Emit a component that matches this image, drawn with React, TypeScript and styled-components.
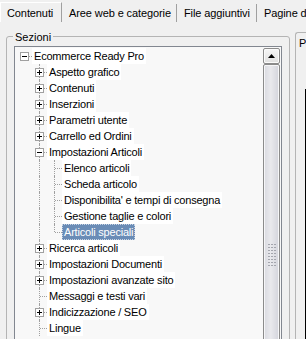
import React from 'react';
import styled, { createGlobalStyle, css } from 'styled-components';

const GlobalStyle = createGlobalStyle`
    html, body {
        margin: 0;
        padding: 0;
        background: #f0f0f0;
    }
    body {
        font-family: "Liberation Sans", Arial, sans-serif;
        font-size: 11px;
        color: #000;
    }
`;

const Window = styled.div`
    width: 306px;
    height: 339px;
    overflow: hidden;
    background: #f0f0f0;
    display: flex;
    flex-direction: column;
`;

const TabStrip = styled.div`
    display: flex;
    align-items: flex-start;
    height: 22px;
    flex-shrink: 0;
    white-space: nowrap;
    overflow: hidden;
`;

const Tab = styled.div<{ $w?: number; $active?: boolean }>`
    box-sizing: border-box;
    flex-shrink: 0;
    ${({ $w }) => ($w ? `width: ${$w}px;` : 'flex: 1;')}
    line-height: 13px;
    letter-spacing: -0.1px;
    border-right: 1px solid #a0a0a0;
    ${({ $active }) =>
        $active
            ? css`
                  margin-top: 2px;
                  height: 20px;
                  padding: 4px 0 0 6px;
                  border-left: 1px solid #ffffff;
                  border-top: 1px solid #ffffff;
              `
            : css`
                  margin-top: 4px;
                  height: 18px;
                  padding: 3px 0 0 7px;
              `}
`;

const Panel = styled.div`
    display: flex;
    align-items: flex-start;
    padding: 10px 0 0 6px;
`;

const GroupBox = styled.div`
    box-sizing: border-box;
    width: 284px;
    margin-top: 4px;
    flex-shrink: 0;
    display: flex;
    flex-direction: column;
    padding: 0 7px;
    border: 1px solid #b4b4b4;
    border-radius: 3px;
`;

const Caption = styled.div`
    align-self: flex-start;
    margin: -6px 0 0 -1px;
    padding: 0 2px;
    line-height: 13px;
    background: #f0f0f0;
`;

const TreeView = styled.div`
    margin-top: 2px;
    height: 400px;
    display: flex;
    background: #f8f8f8;
    border: 1px solid #828790;
    overflow: hidden;
`;

const TreeList = styled.div`
    flex: 1;
    padding: 1px 0 0 2px;
    display: flex;
    flex-direction: column;
`;

const Row = styled.div`
    display: flex;
    height: 16px;
    flex-shrink: 0;
`;

const Guide = styled.div<{ $v: 'none' | 'full' | 'top'; $h?: boolean }>`
    position: relative;
    width: 15px;
    flex-shrink: 0;
    &::before {
        content: '';
        display: ${({ $v }) => ($v === 'none' ? 'none' : 'block')};
        position: absolute;
        left: 7px;
        top: 0;
        height: ${({ $v }) => ($v === 'top' ? '8px' : '16px')};
        border-left: 1px dotted #a0a0a0;
    }
    &::after {
        content: '';
        display: ${({ $h }) => ($h ? 'block' : 'none')};
        position: absolute;
        left: 8px;
        right: 0;
        top: 8px;
        border-top: 1px dotted #a0a0a0;
    }
`;

const Expander = styled.div`
    position: absolute;
    z-index: 1;
    left: 3px;
    top: 4px;
    width: 9px;
    height: 9px;
    box-sizing: border-box;
    border: 1px solid #a0a0a0;
    background: #ffffff;
    display: flex;
    align-items: center;
    justify-content: center;
`;

const Label = styled.div<{ $selected?: boolean }>`
    box-sizing: border-box;
    padding: 0 2px;
    line-height: 16px;
    letter-spacing: -0.2px;
    white-space: nowrap;
    background: #ffffff;
    ${({ $selected }) =>
        $selected &&
        css`
            background: #6a8cb6;
            color: #ffffff;
            outline: 1px dotted #c8d4e4;
            outline-offset: -1px;
        `}
`;

const ScrollBar = styled.div`
    width: 17px;
    margin: 1px 1px 0 0;
    flex-shrink: 0;
    display: flex;
    flex-direction: column;
`;

const ScrollButton = styled.div`
    box-sizing: border-box;
    height: 17px;
    border: 1px solid #8b8b8b;
    border-radius: 2px;
    background: linear-gradient(to bottom, #f6f6f6, #e0e0e0);
    box-shadow: inset 0 0 0 1px #fbfbfb;
    display: flex;
    align-items: center;
    justify-content: center;
`;

const Thumb = styled.div`
    box-sizing: border-box;
    height: 422px;
    border: 1px solid #8b8b8b;
    border-radius: 2px;
    background: linear-gradient(to right, #d9dae0, #e9e9ed 45%, #d3d4dc);
    box-shadow: inset 0 0 0 1px #f6f6f8;
    display: flex;
    align-items: center;
    justify-content: center;
`;

const SidePanel = styled.div`
    flex: 1;
    height: 400px;
    margin-left: 5px;
    padding: 4px 0 0 3px;
    border-left: 1px solid #b4b4b4;
    border-top: 1px solid #b4b4b4;
    border-top-left-radius: 3px;
    overflow: hidden;
    white-space: nowrap;
`;

const SideLabel = styled.div`
    line-height: 13px;
`;

const SideFrame = styled.div`
    margin: 39px 0 0 6px;
    height: 300px;
    border-left: 1px solid #000000;
`;

type Node = {
    label: string;
    open?: boolean;
    selected?: boolean;
    children?: Node[];
    collapsed?: boolean;
    // more siblings follow below the visible area
    more?: boolean;
};

const tree: Node = {
    label: 'Ecommerce Ready Pro',
    open: true,
    more: true,
    children: [
        { label: 'Aspetto grafico', collapsed: true },
        { label: 'Contenuti', collapsed: true },
        { label: 'Inserzioni', collapsed: true },
        { label: 'Parametri utente', collapsed: true },
        { label: 'Carrello ed Ordini', collapsed: true },
        {
            label: 'Impostazioni Articoli',
            open: true,
            children: [
                { label: 'Elenco articoli' },
                { label: 'Scheda articolo' },
                { label: "Disponibilita' e tempi di consegna" },
                { label: 'Gestione taglie e colori' },
                { label: 'Articoli speciali', selected: true },
            ],
        },
        { label: 'Ricerca articoli', collapsed: true },
        { label: 'Impostazioni Documenti', collapsed: true },
        { label: 'Impostazioni avanzate sito', collapsed: true },
        { label: 'Messaggi e testi vari' },
        { label: 'Indicizzazione / SEO', collapsed: true },
        { label: 'Lingue' },
    ],
};

type FlatRow = { node: Node; ancestors: boolean[]; last: boolean; level: number };

const flatten = (node: Node, level: number, ancestors: boolean[], last: boolean, out: FlatRow[]) => {
    out.push({ node, ancestors, last, level });
    if (node.open && node.children) {
        const kids = node.children;
        kids.forEach((child, i) => {
            const childLast = i === kids.length - 1 && !node.more;
            flatten(child, level + 1, [...ancestors, !last && level > 0], childLast, out);
        });
    }
    return out;
};

const Sign: React.FC<{ open: boolean }> = ({ open }) => (
    <svg width="5" height="5" viewBox="0 0 5 5">
        <rect x="0" y="2" width="5" height="1" fill="#000" />
        {!open && <rect x="2" y="0" width="1" height="5" fill="#000" />}
    </svg>
);

const Grip = () => (
    <svg width="8" height="22" viewBox="0 0 8 22">
        {Array.from({ length: 8 }).map((_, r) =>
            [0, 3, 6].map(c => (
                <rect key={`${r}-${c}`} x={c} y={r * 3} width="2" height="1" fill="#a4a6ae" />
            ))
        )}
    </svg>
);

const App: React.FC = () => {
    const rows = flatten(tree, 0, [], true, []);

    return (
        <>
            <GlobalStyle />
            <Window>
                <TabStrip>
                    <Tab $w={62} $active>
                        Contenuti
                    </Tab>
                    <Tab $w={115}>Aree web e categorie</Tab>
                    <Tab $w={80}>File aggiuntivi</Tab>
                    <Tab>Pagine d</Tab>
                </TabStrip>
                <Panel>
                    <GroupBox>
                        <Caption>Sezioni</Caption>
                        <TreeView>
                            <TreeList>
                                {rows.map(({ node, ancestors, last, level }, i) => {
                                    const hasKids = node.open || node.collapsed;
                                    const own = level === 0 ? 'none' : last ? 'top' : 'full';
                                    return (
                                        <Row key={i}>
                                            {ancestors.map((line, j) => (
                                                <Guide key={j} $v={line ? 'full' : 'none'} />
                                            ))}
                                            <Guide $v={own} $h>
                                                {hasKids && (
                                                    <Expander>
                                                        <Sign open={!!node.open} />
                                                    </Expander>
                                                )}
                                            </Guide>
                                            <Label $selected={node.selected}>{node.label}</Label>
                                        </Row>
                                    );
                                })}
                            </TreeList>
                            <ScrollBar>
                                <ScrollButton>
                                    <svg width="7" height="4" viewBox="0 0 7 4">
                                        <polygon points="3.5,0 7,4 0,4" fill="#000" />
                                    </svg>
                                </ScrollButton>
                                <Thumb>
                                    <Grip />
                                </Thumb>
                            </ScrollBar>
                        </TreeView>
                    </GroupBox>
                    <SidePanel>
                        <SideLabel>P</SideLabel>
                        <SideFrame />
                    </SidePanel>
                </Panel>
            </Window>
        </>
    );
};

export default App;
